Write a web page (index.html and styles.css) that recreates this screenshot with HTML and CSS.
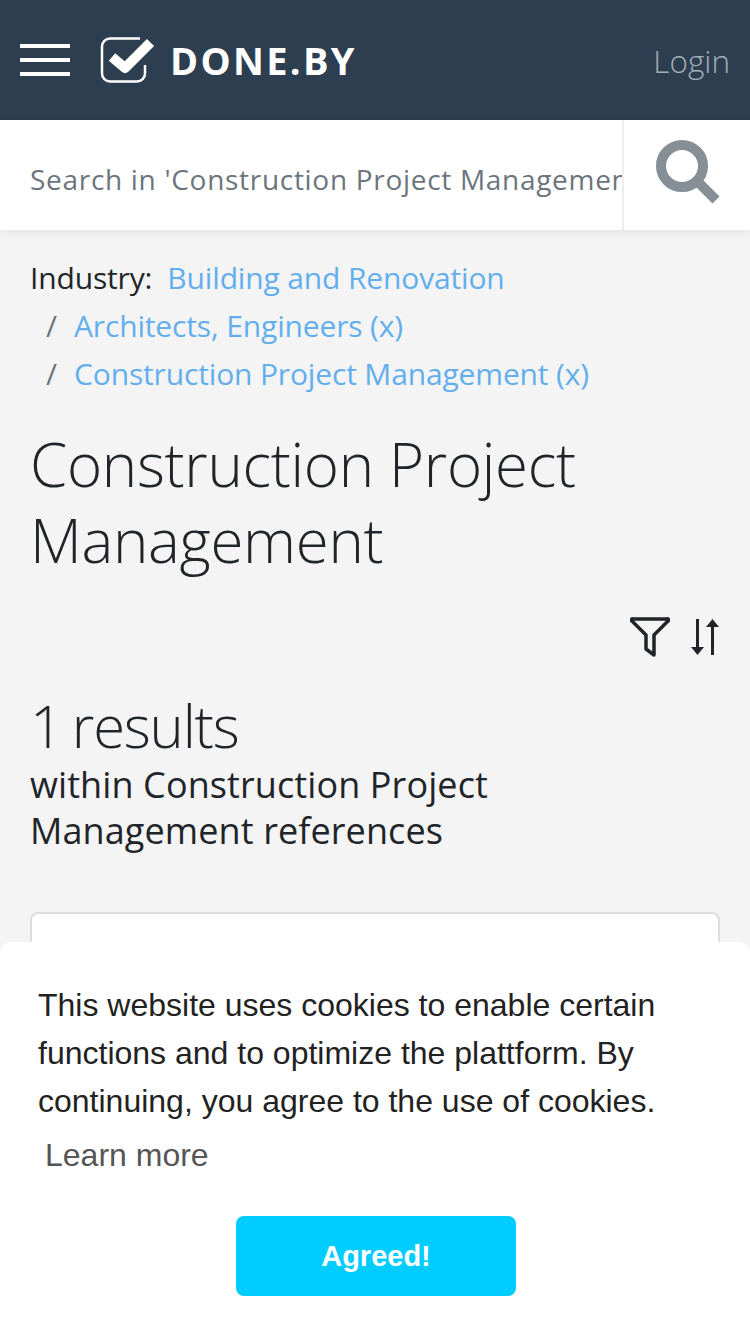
FILE: index.html
```html
<!DOCTYPE html>
<html lang="en">
<head>
  <meta charset="UTF-8" />
  <title>Construction Project Management</title>
  <meta name="viewport" content="width=device-width, initial-scale=1" />
  <link rel="stylesheet" href="styles.css">
</head>
<body>
  <header class="topbar">
    <svg class="burger" width="50" height="32" viewBox="0 0 50 32">
      <path d="M0 2h50M0 16h50M0 30h50" stroke="#fff" stroke-width="4" fill="none"/>
    </svg>
    <svg class="logo-mark" width="56" height="48" viewBox="0 0 56 48">
      <path d="M40 2.500H10a8 8 0 0 0-8 8v27a8 8 0 0 0 8 8h27a8 8 0 0 0 8-8V29" fill="none" stroke="#fff" stroke-width="2.500"/>
      <path d="M12 21l13 11L50.500 6.500" fill="none" stroke="#fff" stroke-width="10" stroke-linejoin="round"/>
    </svg>
    <span class="logo-text">DONE.BY</span>
    <a class="login" href="#">Login</a>
  </header>

  <div class="searchbar">
    <div class="search-text">Search in 'Construction Project Management'</div>
    <div class="search-btn">
      <svg width="66" height="66" viewBox="0 0 66 66">
        <circle cx="26" cy="26" r="21" fill="none" stroke="#868e96" stroke-width="10"/>
        <path d="M40 40l20 20" stroke="#868e96" stroke-width="10"/>
      </svg>
    </div>
  </div>

  <main class="content">
    <div class="crumbs">
      <div><span class="crumb-label">Industry:</span><a href="#">Building and Renovation</a></div>
      <div class="crumb-sub"><span class="slash">/</span><a href="#">Architects, Engineers (x)</a></div>
      <div class="crumb-sub"><span class="slash">/</span><a href="#">Construction Project Management (x)</a></div>
    </div>

    <h1>Construction Project Management</h1>

    <div class="tools">
      <svg width="40" height="40" viewBox="0 0 40 40">
        <path d="M3 2h34a1 1 0 0 1 1 2L24 18v20l-8-6V18L2 4a1 1 0 0 1 1-2z" fill="none" stroke="#212529" stroke-width="3.500" stroke-linejoin="round"/>
      </svg>
      <svg width="30" height="38" viewBox="0 0 30 38">
        <path d="M7.500 1v29M22.500 37V8" fill="none" stroke="#212529" stroke-width="3"/>
        <path d="M1 29h13l-6.500 8zM16 9h13l-6.500-8z" fill="#212529"/>
      </svg>
    </div>

    <div class="results">1 results</div>
    <div class="within">within Construction Project Management references</div>

    <div class="card"></div>
  </main>

  <div class="cookie">
    <p>This website uses cookies to enable certain functions and to optimize the plattform. By continuing, you agree to the use of cookies.</p>
    <a class="learn" href="#">Learn more</a>
    <div class="agree">Agreed!</div>
  </div>
</body>
</html>
```

FILE: styles.css
```css
* { box-sizing: border-box; }

html, body {
  height: 1334px;
  overflow: hidden;
}

body {
  margin: 0;
  background-color: #f4f4f4;
  color: #212529;
  font-family: "Open Sans", sans-serif;
}

a {
  color: #63aeed;
  text-decoration: none;
}

.topbar {
  display: flex;
  align-items: center;
  height: 120px;
  padding: 0 20px;
  background-color: #2c3e50;
}

.logo-mark {
  margin-left: 30px;
}

.logo-text {
  margin-left: 14px;
  color: #fff;
  font-size: 38px;
  font-weight: 700;
  letter-spacing: 2.300px;
}

.login {
  margin-left: auto;
  color: #a3adb7;
  font-size: 31.500px;
  font-weight: 300;
}

.searchbar {
  display: flex;
  height: 110px;
  background-color: #fff;
  box-shadow: 0 2px 10px rgba(0,0,0,0.08);
}

.search-text {
  flex: 1;
  min-width: 0;
  padding: 40px 0 0 30px;
  overflow: hidden;
  white-space: nowrap;
  color: #6c757d;
  font-size: 28px;
  letter-spacing: 0.700px;
}

.search-btn {
  display: flex;
  align-items: center;
  justify-content: center;
  width: 128px;
  padding: 0 0 4px 4px;
  border-left: 2px solid #eee;
}

.content {
  padding: 24px 30px 0;
}

.crumbs {
  font-size: 30px;
  letter-spacing: -0.150px;
  line-height: 48px;
}

.crumb-label {
  margin-right: 15px;
}

.crumb-sub {
  padding-left: 16px;
}

.slash {
  display: inline-block;
  width: 28px;
  color: #6c757d;
}

h1 {
  margin: 28px 0 0;
  font-size: 60px;
  font-weight: 300;
  letter-spacing: -0.300px;
  line-height: 76px;
}

.tools {
  display: flex;
  justify-content: flex-end;
  align-items: center;
  gap: 20px;
  margin-top: 39px;
}

.results {
  margin-top: 32px;
  font-size: 58px;
  font-weight: 300;
  letter-spacing: -1.200px;
  word-spacing: -4px;
  line-height: 73px;
}

.within {
  width: 520px;
  font-size: 36px;
  letter-spacing: 0.100px;
  line-height: 46px;
}

.card {
  height: 300px;
  margin-top: 58px;
  background-color: #fff;
  border: 2px solid #ddd;
  border-radius: 8px;
}

.cookie {
  position: fixed;
  left: 0;
  right: 0;
  bottom: 0;
  height: 392px;
  padding: 39px 38px 0;
  background-color: #fff;
  border-radius: 10px 10px 0 0;
  font-family: "Liberation Sans", Arial, sans-serif;
  font-size: 32px;
  line-height: 48px;
}

.cookie p {
  margin: 0;
  color: #222;
}

.learn {
  display: block;
  margin: 6px 0 0 7px;
  color: #555;
}

.agree {
  width: 280px;
  margin: 37px 0 0 198px;
  background-color: #00ccff;
  border-radius: 8px;
  color: #fff;
  font-size: 29px;
  font-weight: 700;
  line-height: 80px;
  text-align: center;
}
```
